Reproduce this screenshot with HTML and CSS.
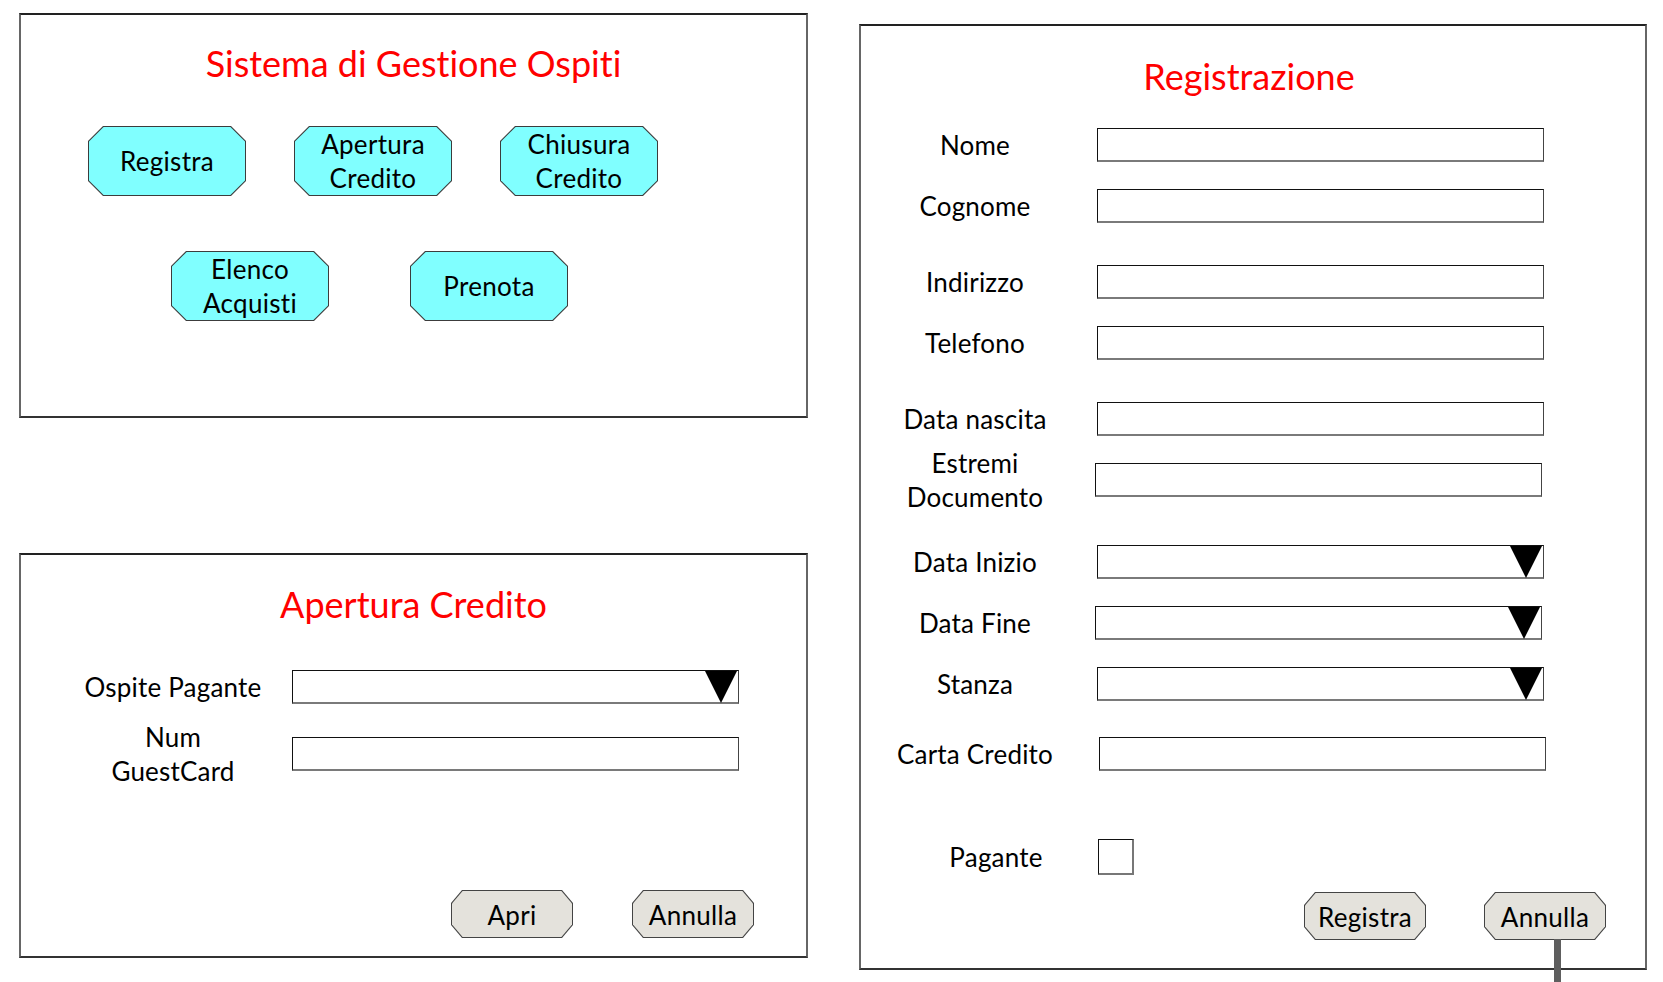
FILE: index.html
```html
<!DOCTYPE html>
<html lang="it">
<head>
<meta charset="utf-8">
<title>Sistema di Gestione Ospiti</title>
<link rel="stylesheet" href="styles.css">
</head>
<body>
<div class="page">
  <div class="left-col">
    <section class="panel panel-menu">
      <h1 class="title">Sistema di Gestione Ospiti</h1>
      <div class="menu-row row-1">
        <div class="oct oct-cyan"><div class="oct-inner">Registra</div></div>
        <div class="oct oct-cyan"><div class="oct-inner">Apertura<br>Credito</div></div>
        <div class="oct oct-cyan"><div class="oct-inner">Chiusura<br>Credito</div></div>
      </div>
      <div class="menu-row row-2">
        <div class="oct oct-cyan"><div class="oct-inner">Elenco<br>Acquisti</div></div>
        <div class="oct oct-cyan"><div class="oct-inner">Prenota</div></div>
      </div>
    </section>

    <section class="panel panel-credit">
      <h1 class="title">Apertura Credito</h1>
      <div class="form form-credit">
        <div class="label">Ospite Pagante</div>
        <div class="field select">
          <svg class="arrow" width="32" height="32" viewBox="0 0 32 32"><polygon points="0,0 32,0 16,32" fill="#000"/></svg>
        </div>
        <div class="label label-2"><span>Num</span><span>GuestCard</span></div>
        <div class="field"></div>
      </div>
      <div class="actions actions-credit">
        <div class="btn-wrap"><div class="oct oct-gray"><div class="oct-inner">Apri</div></div></div>
        <div class="btn-wrap"><div class="oct oct-gray"><div class="oct-inner">Annulla</div></div></div>
      </div>
    </section>
  </div>

  <section class="panel panel-reg">
    <h1 class="title">Registrazione</h1>
    <div class="form form-reg">
      <div class="label">Nome</div>
      <div class="field"></div>

      <div class="label r-s">Cognome</div>
      <div class="field r-s"></div>

      <div class="label r-m">Indirizzo</div>
      <div class="field r-m"></div>

      <div class="label r-s">Telefono</div>
      <div class="field r-s"></div>

      <div class="label r-m">Data nascita</div>
      <div class="field r-m"></div>

      <div class="label label-2 r-s"><span>Estremi</span><span>Documento</span></div>
      <div class="field r-s nudge-left"></div>

      <div class="label r-l">Data Inizio</div>
      <div class="field select r-l">
        <svg class="arrow" width="32" height="32" viewBox="0 0 32 32"><polygon points="0,0 32,0 16,32" fill="#000"/></svg>
      </div>

      <div class="label r-s">Data Fine</div>
      <div class="field select r-s nudge-left">
        <svg class="arrow" width="32" height="32" viewBox="0 0 32 32"><polygon points="0,0 32,0 16,32" fill="#000"/></svg>
      </div>

      <div class="label r-xs">Stanza</div>
      <div class="field select r-xs">
        <svg class="arrow" width="32" height="32" viewBox="0 0 32 32"><polygon points="0,0 32,0 16,32" fill="#000"/></svg>
      </div>

      <div class="label r-ml">Carta Credito</div>
      <div class="field r-ml nudge-right"></div>

      <div class="label label-pagante r-xl">Pagante</div>
      <div class="r-xl"><div class="checkbox"></div></div>
    </div>
    <div class="actions actions-reg">
      <div class="btn-wrap"><div class="oct oct-gray"><div class="oct-inner">Registra</div></div></div>
      <div class="btn-wrap"><div class="oct oct-gray"><div class="oct-inner">Annulla</div></div><div class="connector"></div></div>
    </div>
  </section>
</div>
</body>
</html>
```

FILE: styles.css
```css
* { box-sizing: border-box; }

html, body {
  margin: 0;
  padding: 0;
  background: #ffffff;
  overflow: hidden;
}

body {
  font-family: "Lato", "Liberation Sans", sans-serif;
  font-variant-ligatures: none;
  color: #000;
  width: 1663px;
  height: 982px;
}

.page {
  display: flex;
  align-items: flex-start;
  padding: 13px 0 0 19px;
  gap: 51px;
}

.left-col {
  display: flex;
  flex-direction: column;
  gap: 135px;
}

.panel {
  border: 2px solid #666;
  border-top-color: #222;
  border-bottom-color: #333;
  background: #fff;
}

.panel-menu { width: 789px; height: 405px; }
.panel-credit { width: 789px; height: 405px; position: relative; }
.panel-reg { width: 788px; height: 946px; margin-top: 11px; position: relative; }

.title {
  margin: 0;
  font-weight: 400;
  color: #ff0000;
  font-size: 36px;
  line-height: 40px;
  text-align: center;
  letter-spacing: 0;
  font-variant-ligatures: none;
}

.panel-menu .title { padding-top: 28px; }
.panel-credit .title { padding-top: 29px; }
.panel-reg .title { padding-top: 30px; padding-right: 8px; }

/* Octagon buttons */
.oct {
  clip-path: polygon(15px 0, calc(100% - 15px) 0, 100% 15px, 100% calc(100% - 15px), calc(100% - 15px) 100%, 15px 100%, 0 calc(100% - 15px), 0 15px);
  background: #3c3c3c;
  padding: 1px;
}
.oct-inner {
  height: 100%;
  clip-path: polygon(14.6px 0, calc(100% - 14.6px) 0, 100% 14.6px, 100% calc(100% - 14.6px), calc(100% - 14.6px) 100%, 14.6px 100%, 0 calc(100% - 14.6px), 0 14.6px);
  display: flex;
  align-items: center;
  justify-content: center;
  text-align: center;
  font-size: 26px;
  line-height: 34px;
  letter-spacing: 0.3px;
}

.oct-cyan { width: 158px; height: 70px; }
.oct-cyan .oct-inner { background: #80ffff; }

.oct-gray {
  width: 122px;
  height: 48px;
  clip-path: polygon(11px 0, calc(100% - 11px) 0, 100% 13px, 100% calc(100% - 13px), calc(100% - 11px) 100%, 11px 100%, 0 calc(100% - 13px), 0 13px);
  background: #444;
}
.oct-gray .oct-inner {
  background: #e4e2dc;
  clip-path: polygon(10.6px 0, calc(100% - 10.6px) 0, 100% 12.6px, 100% calc(100% - 12.6px), calc(100% - 10.6px) 100%, 10.6px 100%, 0 calc(100% - 12.6px), 0 12.6px);
  padding-top: 2px;
}

.menu-row { display: flex; }
.row-1 { margin-top: 43px; padding-left: 67px; gap: 48px; }
.row-2 { margin-top: 55px; padding-left: 150px; gap: 81px; }

/* Forms */
.form {
  display: grid;
  align-items: center;
}

.form-credit {
  grid-template-columns: 238px 447px;
  padding-left: 33px;
  margin-top: 46px;
  row-gap: 33px;
}

.form-reg {
  grid-template-columns: 196px 447px;
  column-gap: 24px;
  padding-left: 16px;
  margin-top: 32px;
}

.label {
  font-size: 26px;
  line-height: 34px;
  text-align: center;
  letter-spacing: 0.2px;
}

.label-2 {
  height: 34px;
  display: flex;
  flex-direction: column;
  justify-content: center;
  align-items: center;
}
.label-2 span { display: block; flex: none; }

.field {
  height: 34px;
  border: 1px solid #111;
  border-bottom: 2px solid #7a7a7a;
  border-right-color: #444;
  background: #fff;
}

.select {
  display: flex;
  justify-content: flex-end;
}
.arrow { display: block; margin-right: 1px; }

.nudge-left { margin-left: -2px; margin-right: 2px; }
.nudge-right { margin-left: 2px; margin-right: -2px; }

.r-xs { margin-top: 27px; }
.r-s { margin-top: 27px; }
.r-m { margin-top: 42px; }
.r-l { margin-top: 48px; }
.r-ml { margin-top: 36px; }
.r-xl { margin-top: 68px; }

.label-pagante { padding-left: 42px; }

.checkbox {
  width: 36px;
  height: 36px;
  border: 1px solid #111;
  border-right: 2px solid #777;
  border-bottom: 2px solid #777;
  margin-left: 1px;
}

/* Action buttons */
.actions {
  display: flex;
  justify-content: flex-end;
}
.actions-credit { margin-top: 119px; padding-right: 52px; gap: 59px; }
.actions-reg { margin-top: 17px; padding-right: 39px; gap: 58px; }

.btn-wrap { position: relative; }

.connector {
  position: absolute;
  left: 70px;
  top: 47px;
  width: 7px;
  height: 60px;
  background: #5e5e5e;
}
```
